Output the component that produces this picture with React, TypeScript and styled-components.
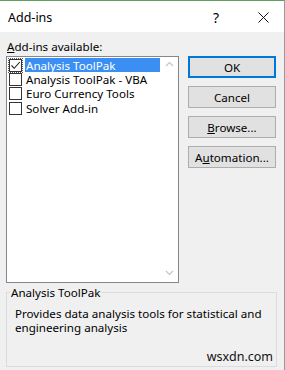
import styled, { createGlobalStyle } from "styled-components";

const Global = createGlobalStyle`
  html, body {
    margin: 0;
    padding: 0;
    background: #f0f0f0;
  }
  * {
    box-sizing: border-box;
  }
`;

const Dialog = styled.div`
  width: 285px;
  height: 370px;
  background: #f0f0f0;
  border-top: 1px solid #5fa05f;
  border-right: 1px solid #9a9a9a;
  font-family: "Noto Sans", "Open Sans", sans-serif;
  font-size: 11.6px;
  color: #000;
  display: flex;
  flex-direction: column;
  overflow: hidden;
  position: relative;
`;

const TitleBar = styled.div`
  height: 31px;
  background: #fff;
  display: flex;
  align-items: center;
  padding: 2px 0 0 8px;
  font-size: 12.5px;
`;

const TitleText = styled.div`
  flex: 1;
`;

const TitleButton = styled.div<{ $w: number; $gap?: number }>`
  width: ${(p) => p.$w}px;
  margin-right: ${(p) => p.$gap ?? 0}px;
  display: flex;
  align-items: center;
  justify-content: center;
  font-size: 14px;
`;

const Body = styled.div`
  padding: 6px 8px 0 6px;
  display: flex;
  flex-direction: column;
`;

const Label = styled.div`
  height: 18px;
  padding-left: 1px;
  line-height: 18px;
`;

const Main = styled.div`
  display: flex;
  align-items: flex-start;
  gap: 9px;
`;

const ListBox = styled.div`
  width: 177px;
  height: 227px;
  background: #fff;
  border: 1px solid #828790;
  display: flex;
`;

const Items = styled.div`
  flex: 1;
  padding: 1px 0 0 2px;
`;

const Item = styled.div`
  height: 14.4px;
  display: flex;
  align-items: center;
  white-space: nowrap;
  line-height: 13px;
`;

const Check = styled.div<{ $focus?: boolean }>`
  width: 13px;
  height: 13px;
  border: 1px solid #333;
  background: #fff;
  margin-right: 3px;
  display: flex;
  align-items: center;
  justify-content: center;
  outline: ${(p) => (p.$focus ? "1px dotted #555" : "none")};
  outline-offset: 0px;
`;

const ItemText = styled.div<{ $selected?: boolean }>`
  flex: 1;
  height: 100%;
  display: flex;
  align-items: center;
  padding-left: 1px;
  background: ${(p) => (p.$selected ? "#3b8ff2" : "transparent")};
  color: ${(p) => (p.$selected ? "#fff" : "#000")};
`;

const Scrollbar = styled.div`
  width: 18px;
  display: flex;
  flex-direction: column;
  justify-content: space-between;
  align-items: center;
  padding: 4px 0 6px;
  color: #c4c4c4;
`;

const Buttons = styled.div`
  display: flex;
  flex-direction: column;
  gap: 8px;
`;

const Button = styled.div<{ $default?: boolean }>`
  width: 88px;
  height: 22px;
  background: #e1e1e1;
  border: ${(p) => (p.$default ? "2px solid #0078d7" : "1px solid #adadad")};
  display: flex;
  align-items: center;
  justify-content: center;
`;

const U = styled.span`
  text-decoration: underline;
`;

const Group = styled.fieldset`
  margin: 2px 0 0 0;
  width: 271px;
  height: 82px;
  border: 1px solid #dcdcdc;
  padding: 4px 8px 0 8px;
  min-width: 0;
`;

const Legend = styled.legend`
  padding: 0 1px;
  margin-left: -5px;
`;

const Description = styled.div`
  line-height: 14px;
  margin-top: 3px;
`;

const Watermark = styled.div`
  position: absolute;
  right: 11px;
  bottom: 5px;
  font-size: 12.5px;
  color: #111;
`;

const Chevron = ({ up }: { up?: boolean }) => (
  <svg width="9" height="6" viewBox="0 0 9 6">
    <path
      d={up ? "M1 5 L4.5 1.5 L8 5" : "M1 1 L4.5 4.5 L8 1"}
      fill="none"
      stroke="currentColor"
      strokeWidth="1.2"
    />
  </svg>
);

const items = [
  { name: "Analysis ToolPak", checked: true },
  { name: "Analysis ToolPak - VBA", checked: false },
  { name: "Euro Currency Tools", checked: false },
  { name: "Solver Add-in", checked: false },
];

export default function App() {
  return (
    <>
      <Global />
      <Dialog>
        <TitleBar>
          <TitleText>Add-ins</TitleText>
          <TitleButton $w={40} $gap={6}>?</TitleButton>
          <TitleButton $w={42}>
            <svg width="11" height="11" viewBox="0 0 11 11">
              <path d="M0.5 0.5 L10.5 10.5 M10.5 0.5 L0.5 10.5" stroke="#111" strokeWidth="1" />
            </svg>
          </TitleButton>
        </TitleBar>
        <Body>
          <Label>
            <U>A</U>dd-ins available:
          </Label>
          <Main>
            <ListBox>
              <Items>
                {items.map((it, i) => (
                  <Item key={it.name}>
                    <Check $focus={i === 0}>
                      {it.checked && (
                        <svg width="11" height="11" viewBox="0 0 11 11">
                          <path d="M1.5 5.5 L4.2 8.3 L9.8 2" fill="none" stroke="#222" strokeWidth="1.1" />
                        </svg>
                      )}
                    </Check>
                    <ItemText $selected={i === 0}>{it.name}</ItemText>
                  </Item>
                ))}
              </Items>
              <Scrollbar>
                <Chevron up />
                <Chevron />
              </Scrollbar>
            </ListBox>
            <Buttons>
              <Button $default>OK</Button>
              <Button>Cancel</Button>
              <Button>
                <span>
                  <U>B</U>rowse...
                </span>
              </Button>
              <Button>
                <span>
                  A<U>u</U>tomation...
                </span>
              </Button>
            </Buttons>
          </Main>
          <Group>
            <Legend>Analysis ToolPak</Legend>
            <Description>
              Provides data analysis tools for statistical and engineering analysis
            </Description>
          </Group>
        </Body>
        <Watermark>wsxdn.com</Watermark>
      </Dialog>
    </>
  );
}
